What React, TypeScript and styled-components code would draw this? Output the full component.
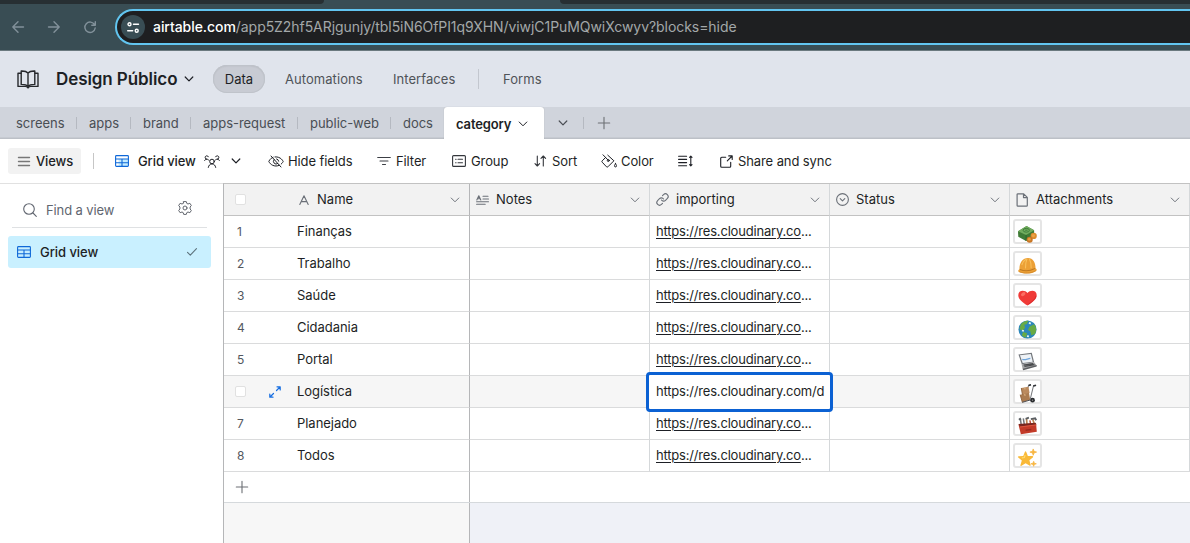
import React from 'react';
import styled, { createGlobalStyle, css } from 'styled-components';

const GlobalStyle = createGlobalStyle`
  * { box-sizing: border-box; }
  body { margin: 0; overflow: hidden; }
`;

const Page = styled.div`
  width: 1190px;
  height: 543px;
  overflow: hidden;
  display: flex;
  flex-direction: column;
  background: #fff;
  color: #1d1f25;
  font-family: Inter, "Liberation Sans", sans-serif;
  font-size: 13px;
  line-height: 18px;
  white-space: nowrap;
`;

const Svg = styled.svg`
  display: block;
  flex: none;
  overflow: visible;
`;

/* ---------- Browser chrome ---------- */

const Chrome = styled.div`
  height: 51px;
  flex: none;
  background: #394d54;
  border-bottom: 1px solid #6b797f;
`;

const TabStrip = styled.div`
  height: 4px;
  display: flex;
  justify-content: space-between;
`;

const TabShadow = styled.div<{ $w: number; $side: 'left' | 'right' }>`
  width: ${(p) => p.$w}px;
  background: #272f33;
  border-radius: ${(p) => (p.$side === 'left' ? '0 0 8px 0' : '0 0 0 8px')};
`;

const AddressRow = styled.div`
  display: flex;
  padding-top: 5px;
`;

const NavButtons = styled.div`
  width: 115px;
  display: flex;
  align-items: center;
  padding-left: 12px;
  gap: 24px;
  color: #82919a;
`;

const Omnibox = styled.div`
  flex: 1;
  height: 36px;
  display: flex;
  align-items: center;
  gap: 8px;
  padding-left: 4px;
  background: #1e1f21;
  border: 2px solid #62c5f0;
  border-right: 0;
  border-radius: 18px 0 0 18px;
`;

const SiteBadge = styled.div`
  width: 24px;
  height: 24px;
  border-radius: 50%;
  background: #394d54;
  display: grid;
  place-items: center;
  color: #fff;
`;

const Url = styled.div`
  font-size: 14px;
  letter-spacing: -0.06px;
  color: #a3a8a9;
  b {
    font-weight: 500;
    color: #fff;
  }
`;

/* ---------- Base header ---------- */

const Header = styled.header`
  height: 56px;
  flex: none;
  display: flex;
  align-items: center;
  padding-left: 17px;
  background: #e0e4ec;
`;

const BaseName = styled.h1`
  margin: 0 0 0 17px;
  width: 128px;
  font-size: 17px;
  line-height: 24px;
  font-weight: 600;
  letter-spacing: -0.08px;
`;

const NavPill = styled.div`
  width: 52px;
  height: 28px;
  margin-left: 19px;
  display: grid;
  place-items: center;
  padding-bottom: 1px;
  border-radius: 14px;
  background: #c8cbd3;
  box-shadow: inset 0 0 0 1px #bfc3ca, inset 0 1px 2px rgba(0, 0, 0, 0.1);
`;

const NavLink = styled.div<{ $w: number; $ml?: number }>`
  width: ${(p) => p.$w}px;
  margin-left: ${(p) => p.$ml ?? 20}px;
  padding-bottom: 1px;
  color: #4f5358;
  letter-spacing: 0.06px;
`;

const Rule = styled.div<{ $h: number; $color: string; $ml?: number; $mr?: number }>`
  width: 1px;
  height: ${(p) => p.$h}px;
  flex: none;
  background: ${(p) => p.$color};
  margin-left: ${(p) => p.$ml ?? 0}px;
  margin-right: ${(p) => p.$mr ?? 0}px;
`;

/* ---------- Table tabs ---------- */

const TabBar = styled.nav`
  height: 32px;
  flex: none;
  display: flex;
  align-items: center;
  background: #d0d4dc;
  border-bottom: 1px solid #bcc0c7;
  box-shadow: inset 0 -1px 0 #c6cad1;
  color: #4a4e54;
`;

const TabList = styled.div`
  display: flex;
  width: 444px;
  padding: 1px 0 0 4px;
`;

const TableTab = styled.div<{ $w: number; $last?: boolean }>`
  width: ${(p) => p.$w}px;
  display: flex;
  align-items: center;
  justify-content: space-between;
  padding-left: 12px;
  letter-spacing: -0.03px;
  &::after {
    content: '';
    width: 1px;
    height: 12px;
    background: ${(p) => (p.$last ? 'transparent' : '#b5b9c1')};
  }
`;

const ActiveTab = styled.div`
  width: 100px;
  height: 32px;
  align-self: flex-start;
  display: flex;
  align-items: center;
  padding: 1px 0 0 12px;
  gap: 7px;
  background: #fff;
  border-radius: 3px 3px 0 0;
  color: #1d1f25;
  font-weight: 600;
  letter-spacing: -0.13px;
  box-shadow: 0 0 1px rgba(0, 0, 0, 0.25);
  clip-path: inset(-1px -1px 0 -1px);
`;

const TabActions = styled.div`
  display: flex;
  align-items: center;
  padding-left: 14px;
`;

/* ---------- View toolbar ---------- */

const Toolbar = styled.div`
  height: 44px;
  flex: none;
  display: flex;
  align-items: center;
  padding-left: 8px;
`;

const ViewsButton = styled.div`
  width: 73px;
  height: 26px;
  display: flex;
  align-items: center;
  gap: 6px;
  padding-left: 10px;
  border-radius: 3px;
  background: #f2f2f2;
  font-weight: 500;
  letter-spacing: -0.1px;
`;

const Tool = styled.div<{ $w: number; $gap?: number; $strong?: boolean }>`
  width: ${(p) => p.$w}px;
  flex: none;
  display: flex;
  align-items: center;
  gap: ${(p) => p.$gap ?? 4}px;
  font-weight: ${(p) => (p.$strong ? 500 : 400)};
  letter-spacing: -0.1px;
`;

/* ---------- Sidebar ---------- */

const Body = styled.div`
  flex: 1;
  display: flex;
  min-height: 0;
`;

const Sidebar = styled.aside`
  width: 223px;
  flex: none;
  border-top: 1px solid #e1e1e1;
  padding: 8px 12px 0 8px;
`;

const SearchRow = styled.div`
  height: 36px;
  margin: 0 4px;
  padding: 0 15px 0 11px;
  display: flex;
  align-items: center;
  border-bottom: 1px solid #dfe1e3;
  color: #616670;
`;

const SearchLabel = styled.span`
  flex: 1;
  margin-left: 9px;
  padding-top: 1px;
  letter-spacing: -0.12px;
`;

const SidebarView = styled.div`
  height: 32px;
  width: 203px;
  margin-top: 8px;
  padding: 0 14px 0 9px;
  display: flex;
  align-items: center;
  background: #c9f0ff;
  border-radius: 3px;
  font-weight: 500;
  letter-spacing: -0.06px;
  span {
    flex: 1;
    margin-left: 9px;
  }
`;

const GearSlot = styled.div`
  margin-top: -4px;
`;

/* ---------- Grid ---------- */

const GridPane = styled.main`
  flex: 1;
  display: flex;
  flex-direction: column;
  border-top: 1px solid #c2c2c2;
  border-left: 1px solid #b5b6b8;
`;

const Row = styled.div<{ $header?: boolean; $hover?: boolean }>`
  display: grid;
  grid-template-columns: 246px repeat(4, 180px);
  height: 32px;
  flex: none;
  ${(p) => p.$header && css`background: #f2f2f2; > div { border-bottom-color: #c2c2c2; }`}
  ${(p) => p.$hover && css`background: #f6f6f6;`}
`;

const Cell = styled.div<{ $pad?: number; $frozen?: boolean }>`
  min-width: 0;
  position: relative;
  display: flex;
  align-items: center;
  padding-left: ${(p) => p.$pad ?? 6}px;
  border-bottom: 1px solid #dadbdc;
  border-right: 1px solid ${(p) => (p.$frozen ? '#b5b6b8' : '#d5d8da')};
`;

const FieldTitle = styled.span`
  flex: 1;
  margin-left: 7px;
  padding-bottom: 1px;
  letter-spacing: 0.02px;
`;

const FieldMenu = styled.span`
  margin-right: 9px;
  color: #70757d;
`;

const IndexSlot = styled.span`
  width: 34px;
  color: #54585f;
  font-size: 12px;
  padding-left: 2px;
`;

const Checkbox = styled.span`
  width: 11px;
  height: 11px;
  display: block;
  margin-left: -2px;
  border: 1px solid #e1e1e1;
  border-radius: 2px;
  background: #fff;
`;

const ExpandSlot = styled.span`
  width: 28px;
  color: #166ee1;
`;

const CellText = styled.span`
  padding-bottom: 2px;
  letter-spacing: -0.04px;
`;

const Link = styled.span`
  padding-bottom: 2px;
  letter-spacing: -0.19px;
  u {
    text-underline-offset: 2px;
    text-decoration-thickness: 1px;
  }
`;

const CellEditor = styled.div`
  position: absolute;
  z-index: 2;
  left: -4px;
  top: -4px;
  width: 187px;
  height: 40px;
  padding: 0 6px 0 7px;
  border: 3px solid #0b61d3;
  border-radius: 4px;
  background: #fff;
  line-height: 33px;
  letter-spacing: -0.19px;
`;

const Thumb = styled.div`
  width: 29px;
  height: 25px;
  margin-left: -3px;
  display: grid;
  place-items: center;
  padding-top: 3px;
  background: #fff;
  border: 2px solid #e5e5e5;
  border-radius: 3px;
`;

const AddRow = styled.div`
  height: 31px;
  flex: none;
  display: grid;
  grid-template-columns: 246px 1fr;
  border-bottom: 1px solid #d5d9dc;
`;

const AddCell = styled.div`
  display: flex;
  align-items: center;
  padding-left: 12px;
  border-right: 1px solid #b5b6b8;
`;

const Footer = styled.div`
  flex: 1;
  display: grid;
  grid-template-columns: 246px 1fr;
  background: #eff1f7;
`;

const FooterFrozen = styled.div`
  background: #f7f7f7;
  border-right: 1px solid #b5b6b8;
`;

/* ---------- Icons ---------- */

type IconProps = { w: number; h?: number; vb?: string; sw?: number; color?: string; children: React.ReactNode };

const Icon = ({ w, h = w, vb, sw = 1, color = 'currentColor', children }: IconProps) => (
  <Svg width={w} height={h} viewBox={vb ?? `0 0 ${w} ${h}`} fill="none" stroke={color}
    strokeWidth={sw} strokeLinecap="round" strokeLinejoin="round">
    {children}
  </Svg>
);

const Chevron = ({ color, sw = 1 }: { color?: string; sw?: number }) => (
  <Icon w={10} h={6} sw={sw} color={color}><path d="M1.2 1L5 4.800 8.800 1" /></Icon>
);

const Plus = () => (
  <Icon w={12} sw={1.1} color="#6c6f74"><path d="M6 .3v11.4M.3 6h11.4" /></Icon>
);

const GridIcon = () => (
  <Icon w={14} h={12} sw={1.1} color="#0f68d8">
    <rect x="3.6" y="4" width="9.6" height="7" fill="#c4ecff" stroke="none" />
    <rect x=".6" y=".6" width="12.8" height="10.8" rx=".8" />
    <path d="M.6 4h12.8M.6 7.7h12.8M7 4v7.4" />
  </Icon>
);

const BookIcon = () => (
  <Icon w={22} h={19} sw={1.4} color="#26282c">
    <path d="M11 3.2C9.5 1.2 7 .9 4.2 1v13.4c2.8-.1 5.3.3 6.8 2.1 1.500-1.800 4-2.200 6.800-2.100V1C15 .9 12.500 1.200 11 3.200zM11 3.200v13.300" />
    <path d="M4 3.200H1v13.200h7.200c1.300 0 2 .5 2.800 1.500.8-1 1.500-1.500 2.800-1.500H21V3.200h-3" />
  </Icon>
);

const PeopleIcon = () => (
  <Icon w={16} h={13} sw={1}>
    <circle cx="8" cy="6.500" r="2.300" />
    <path d="M4.300 12.400c.4-2 1.700-3.500 3.700-3.500s3.300 1.500 3.700 3.500M.6 5.500C1.100 4.700 1.800 4.200 2.800 4.200a1.700 1.700 0 1 1 1.600-2.400M15.400 5.500c-.5-.8-1.200-1.300-2.200-1.300a1.700 1.700 0 1 0-1.600-2.400M2.800 4.200c1 0 1.600.3 2.100 1M13.200 4.200c-1 0-1.600.3-2.100 1" />
  </Icon>
);

const HideIcon = () => (
  <Icon w={16} h={13} sw={1}>
    <path d="M3 1l10 11M5.100 2.200C2.100 3.300.8 6.500.8 6.500s2 4.500 7.200 4.500c1.300 0 2.400-.3 3.300-.7M7 1.900c6-.6 8.200 4.600 8.200 4.600s-.6 1.400-2 2.600M6.100 4.600a2.700 2.700 0 0 0 3.700 3.900M8.600 3.900a2.700 2.700 0 0 1 2.100 2.300" />
  </Icon>
);

const FilterIcon = () => (
  <Icon w={14} h={10} sw={1.1} color="#3c3f45"><path d="M.7 1.500h12.600M3 5h8M5.500 8.500h3" /></Icon>
);

const GroupIcon = () => (
  <Icon w={14} h={12} sw={1.1} color="#34373c">
    <rect x=".6" y=".6" width="12.800" height="10.800" rx="1" />
    <path d="M3.600 4.200h.5M6 4.200h4.500M3.600 7.700h.5M6 7.700h4.500" />
  </Icon>
);

const SortIcon = () => (
  <Icon w={13} h={12} sw={1.1} color="#34373c">
    <path d="M3.300 1v10M1 8.700L3.300 11l2.300-2.300M9.300 11V1M7 3.300L9.300 1l2.300 2.300" />
  </Icon>
);

const ColorIcon = () => (
  <Icon w={16} h={14} sw={1}>
    <path d="M2 .8l5.200 5.400M6.800 1.200l6.100 5.600-6 6a1 1 0 0 1-1.400 0L1.200 8.200a1 1 0 0 1 0-1.400l3.600-3.500" />
    <circle cx="7.300" cy="6.500" r="1" />
    <path d="M14.500 9.600c.7 1.200 1 1.800 1 2.300a1 1 0 0 1-2 0c0-.5.300-1.100 1-2.300z" />
  </Icon>
);

const RowHeightIcon = () => (
  <Icon w={15} h={12} sw={1.1}>
    <path d="M.6 1.200h8M.6 4.400h8M.6 7.600h8M.6 10.800h8M12.800 1.200v9.600M11.600 2.300l1.200-1.200L14 2.300M11.600 9.700l1.200 1.200L14 9.700" />
  </Icon>
);

const ShareIcon = () => (
  <Icon w={13} h={13} sw={1.1}>
    <path d="M8.700.9h3.500v3.500M12.100 1L7.300 5.800M5.700 2.300H1.700a1 1 0 0 0-1 1v8a1 1 0 0 0 1 1h8a1 1 0 0 0 1-1v-4" />
  </Icon>
);

const GearIcon = () => (
  <Icon w={14} sw={1} color="#62666e">
    <circle cx="7" cy="7" r="2" />
    <path d="M5.700.6h2.600l.5 1.800 1.200.6 1.900-.7 1.400 2.200-1.200 1.500v2l1.200 1.500-1.400 2.200-1.900-.7-1.200.6-.5 1.800H5.700l-.5-1.800-1.200-.6-1.900.7L.7 9.500 1.900 8V6L.7 4.500l1.400-2.200L4 3l1.200-.6z" />
  </Icon>
);

const fieldIcons: Record<string, React.ReactNode> = {
  text: <Icon w={12} color="#6b7078" sw={1.1}><path d="M1.800 10.500L6 1.800l4.200 8.700M3.300 7.600h5.400" /></Icon>,
  notes: (
    <Icon w={13} h={10} color="#6b7078" sw={1.1}>
      <path d="M.8 5L2.800.8 4.800 5M1.500 3.700h2.600M7 1.200h5M7 4h5.500M.6 6.700h11.900M.6 9.300h8.600" />
    </Icon>
  ),
  url: (
    <Icon w={13} h={13} vb="0 0 24 24" color="#6b7078" sw={2}>
      <path d="M10 13a5 5 0 0 0 7.54.54l3.500-3.500a5 5 0 0 0-7.070-7.070l-2 2M14 11a5 5 0 0 0-7.540-.54l-3.500 3.500a5 5 0 0 0 7.070 7.070l2-2" />
    </Icon>
  ),
  select: (
    <Icon w={13} color="#6b7078" sw={1.1}><circle cx="6.500" cy="6.500" r="5.900" /><path d="M4.200 5.600l2.300 2.200 2.300-2.200" /></Icon>
  ),
  file: (
    <Icon w={13} h={14} color="#6b7078" sw={1.2}><path d="M7.700.8H1.900a.8.8 0 0 0-.8.8v10.800a.8.8 0 0 0 .8.8h8.600a.8.8 0 0 0 .8-.8V4.400zM7.500.9v3.700h3.700" /></Icon>
  ),
};

const thumbs: React.ReactNode[] = [
  <>
    <path d="M0 7.500L9 2l8 4.500v6.500L8.500 18 .3 13.500z" fill="#3f7b36" />
    <path d="M0 7.500L9 2l8 4.500-8.500 5z" fill="#72ad5f" />
    <path d="M8.500 11.500v6.300" stroke="#2c6329" />
    <ellipse cx="8.700" cy="6.600" rx="3.300" ry="2" stroke="#3c7c38" />
    <path d="M7.500 6.500h2.500" stroke="#3c7c38" />
    <circle cx="16.500" cy="12.500" r="3.300" fill="#dd8c2e" /><circle cx="12.300" cy="16.500" r="3.200" fill="#c97625" />
    <circle cx="16.200" cy="12.200" r="1.700" fill="#eda347" /><circle cx="12" cy="16" r="1.600" fill="#e69a3f" />
  </>,
  <>
    <path d="M1.500 14C1.500 6.500 5 2 10.500 2c5.300 0 8 4.500 8 11 1.500 1 1.600 2.100.6 2.800-4 3.200-13 3.700-18.600.8-.8-1 .2-2 1-2.600z" fill="#eca036" />
    <path d="M4 9.500C5 6.500 6.500 4.500 8.500 3.500M9.500 3c-1.300 3-1.800 6.500-1.600 10M12 3c1.500 3 2 6.500 1.900 10" stroke="#f9c05c" strokeWidth="1.100" />
    <path d="M2 14.300c4.500 1.800 11 1.500 16-1.300" stroke="#be7922" strokeWidth="1.100" />
    <path d="M1.300 16.600c5 2 12.500 1.800 17.500-1.200" stroke="#cf8628" strokeWidth=".8" />
  </>,
  <>
    <path d="M10 18.500C5 15 .3 12 .3 7.500.3 1.800 7.200 1.500 10 5.300c2.800-3.800 9.700-3.500 9.700 2.200 0 4.500-4.700 7.500-9.700 11z" fill="#f03a37" />
    <ellipse cx="5.500" cy="6.500" rx="2.600" ry="1.700" fill="#fb6e63" transform="rotate(-35 5.500 6.500)" />
    <path d="M11 17c4-2.800 7.300-5 7.800-8.500" stroke="#d42a2e" />
  </>,
  <>
    <circle cx="10" cy="10" r="9.500" fill="#2c87bb" />
    <path d="M3 4.500c2-2.500 5-4 8-3.600L9 4.500 6.500 5l1 3L5 11.500l-3.500-2zM12 7l5-2.500c2.500 3 3 7 .5 10.500L14 16l-1-4-2.500-1.500zM5.500 12.500l4 1.500-1 4.300c-2-.3-3.500-1-4.500-2.300z" fill="#68ab45" />
    <path d="M4.200 11l2 .6M11.500 3l2 .8M9.500 17l2 .2" stroke="#e1f4ef" strokeWidth="1.800" />
  </>,
  <>
    <path d="M.5 2.500L14.500.8l2.500 10L4 13z" fill="#73777c" />
    <path d="M2 3.500l11.500-1.300 2 8L5 11.500z" fill="#eef2f6" />
    <path d="M4.500 7.800c3 1 5-.5 8.500-1" stroke="#6fa5dc" strokeWidth="1.400" />
    <path d="M3.800 13L17 10.800l2.700 3.500L5 18.300z" fill="#a3a4a6" />
    <path d="M5 17.700l14.700-3.900v1.500L5.500 19.300z" fill="#5d5f62" />
    <path d="M6 13.800l10-1.600M6.800 15.300l10.500-2" stroke="#47494c" strokeWidth="1.200" />
  </>,
  <>
    <path d="M19 1.500l-2.700.5-3.300 13.500 1.500 1.500M13.500.8l-2.300.7-1.700 5" stroke="#6a6d71" strokeWidth="1" />
    <path d="M16 2.100l3-.8M11 1.600l2.700-.9" stroke="#303236" strokeWidth="1.600" />
    <path d="M3.500 4.200L11 3l1.200 6.500-7.500 2z" fill="#bb8a5e" />
    <path d="M2.300 11.300l9.200-2 1.300 7.200-8.200 2.800z" fill="#ab7b50" />
    <path d="M3.500 4.200l1.200 7.200M2.300 11.300l2.300 8" stroke="#8e633d" />
    <path d="M7 3.700l.4 2M7 10.400l.5 2" stroke="#d9b183" strokeWidth="1.200" />
    <circle cx="15.300" cy="17" r="2.500" fill="#2b2d30" /><circle cx="15.300" cy="17" r=".7" fill="#999" />
    <path d="M4.500 19.300l8.500-2.500" stroke="#44464a" />
  </>,
  <>
    <path d="M3.500 10L2.500 3M6.800 10L5.600 2.500" stroke="#747679" strokeWidth="1.600" />
    <path d="M9.500 9.500L9 3M17.500 9.500l-2-6" stroke="#ba8653" strokeWidth="1.800" />
    <path d="M13.500 9.500l-1-5" stroke="#c14635" strokeWidth="1.500" />
    <path d="M1 4l2-1.500M8 3l3.500-1.200M13.500 3.300L18 2.500l1.200 2" stroke="#5b5f63" strokeWidth="2" />
    <path d="M.5 9L19 7.500l.8 9L3 19.300z" fill="#c33b29" />
    <path d="M.5 8.500L18.500 7l.7 2L2 11z" fill="#79271f" />
    <path d="M2 11.600l17.300-2.200" stroke="#dd5841" /><path d="M8 14.300l6-.8v1.500l-6 .8z" fill="#9a2b20" />
  </>,
  <>
    <path d="M7.200 4.300c.5-1 1.100-1 1.500 0l1.700 4 4.700.2c1 0 1.200.8.5 1.400L12 12.800l1.300 4.800c.2 1-.5 1.400-1.300.9L8 16l-4.300 2.800c-.8.5-1.400 0-1.100-.9L4 13.200.3 10.100c-.7-.6-.5-1.300.5-1.400l4.700-.3z" fill="#f9b938" />
    <path d="M7.500 7.500L6.700 10l-2.700.4" stroke="#ffdb72" strokeWidth="1.200" />
    <path d="M16 1l.9 2.500 2.700.8-2.700.9L16 7.700l-.8-2.500-2.700-.9 2.700-.8zM16.500 14l.7 2 2.100.6-2.100.7-.7 2-.7-2-2.100-.7 2.100-.6z" fill="#f7b540" stroke="#f7b540" strokeWidth=".8" strokeLinejoin="round" />
  </>,
];

const fields = [
  { name: 'Notes', icon: 'notes' },
  { name: 'importing', icon: 'url' },
  { name: 'Status', icon: 'select' },
  { name: 'Attachments', icon: 'file' },
];

const names = ['Finanças', 'Trabalho', 'Saúde', 'Cidadania', 'Portal', 'Logística', 'Planejado', 'Todos'];
const activeRow = 5;

const tables = [
  { name: 'screens', w: 73 },
  { name: 'apps', w: 54 },
  { name: 'brand', w: 60 },
  { name: 'apps-request', w: 107 },
  { name: 'public-web', w: 93 },
  { name: 'docs', w: 53 },
];

export default function App() {
  return (
    <Page>
      <GlobalStyle />
      <Chrome>
        <TabStrip>
          <TabShadow $w={324} $side="left" />
          <TabShadow $w={630} $side="right" />
        </TabStrip>
        <AddressRow>
          <NavButtons>
            <Icon w={12} sw={1.4}><path d="M11.500 6H.8M6 .8L.8 6 6 11.200" /></Icon>
            <Icon w={12} sw={1.4}><path d="M.5 6h10.700M6 .8L11.200 6 6 11.200" /></Icon>
            <Icon w={12} sw={1.4}><path d="M10.600 3.700A5.200 5.200 0 1 0 11.200 7M11.300.7v3.500H7.800" /></Icon>
          </NavButtons>
          <Omnibox>
            <SiteBadge>
              <Icon w={12} h={11} sw={1.4}>
                <circle cx="2.500" cy="2.300" r="1.500" /><path d="M6.500 2.300h5M.7 8.700h5" /><circle cx="9.700" cy="8.700" r="1.500" />
              </Icon>
            </SiteBadge>
            <Url><b>airtable.com</b>/app5Z2hf5ARjgunjy/tbl5iN6OfPI1q9XHN/viwjC1PuMQwiXcwyv?blocks=hide</Url>
          </Omnibox>
        </AddressRow>
      </Chrome>

      <Header>
        <BookIcon />
        <BaseName>Design Público</BaseName>
        <Chevron sw={1.200} />
        <NavPill>Data</NavPill>
        <NavLink $w={88}>Automations</NavLink>
        <NavLink $w={85}>Interfaces</NavLink>
        <Rule $h={20} $color="#c3c7cf" />
        <NavLink $w={60} $ml={24}>Forms</NavLink>
      </Header>

      <TabBar>
        <TabList>
          {tables.map((t, i) => (
            <TableTab key={t.name} $w={t.w} $last={i === tables.length - 1}>{t.name}</TableTab>
          ))}
        </TabList>
        <ActiveTab>category<Chevron /></ActiveTab>
        <TabActions>
          <Chevron sw={1.200} />
          <Rule $h={12} $color="#b5b9c1" $ml={15} $mr={14} />
          <Plus />
        </TabActions>
      </TabBar>

      <Toolbar>
        <ViewsButton>
          <Icon w={12} h={11} color="#777" sw={1.4}><path d="M.5 1.500h11M.5 5.500h11M.5 9.500h11" /></Icon>
          Views
        </ViewsButton>
        <Rule $h={16} $color="#c6c6c6" $ml={12} $mr={21} />
        <Tool $w={89} $gap={9} $strong><GridIcon />Grid view</Tool>
        <Tool $w={64} $gap={11}><PeopleIcon /><Chevron sw={1.200} /></Tool>
        <Tool $w={109}><HideIcon />Hide fields</Tool>
        <Tool $w={75} $gap={5}><FilterIcon />Filter</Tool>
        <Tool $w={82} $gap={5}><GroupIcon />Group</Tool>
        <Tool $w={67} $gap={5}><SortIcon />Sort</Tool>
        <Tool $w={77}><ColorIcon />Color</Tool>
        <Tool $w={42}><RowHeightIcon /></Tool>
        <Tool $w={120} $gap={5}><ShareIcon />Share and sync</Tool>
      </Toolbar>

      <Body>
        <Sidebar>
          <SearchRow>
            <Icon w={14} sw={1.1}><circle cx="6" cy="6" r="5.300" /><path d="M10 10l3.300 3.300" /></Icon>
            <SearchLabel>Find a view</SearchLabel>
            <GearSlot><GearIcon /></GearSlot>
          </SearchRow>
          <SidebarView>
            <GridIcon />
            <span>Grid view</span>
            <Icon w={10} h={8} color="#5d737d" sw={1.1}><path d="M.5 4.300l2.800 2.900L9.500.6" /></Icon>
          </SidebarView>
        </Sidebar>

        <GridPane>
          <Row $header>
            <Cell $frozen $pad={11}>
              <IndexSlot><Checkbox /></IndexSlot>
              <ExpandSlot />
              <HeaderIcon>{fieldIcons.text}</HeaderIcon>
              <FieldTitle>Name</FieldTitle>
              <FieldMenu><Chevron /></FieldMenu>
            </Cell>
            {fields.map((f) => (
              <Cell key={f.name}>
                {fieldIcons[f.icon]}
                <FieldTitle>{f.name}</FieldTitle>
                <FieldMenu><Chevron /></FieldMenu>
              </Cell>
            ))}
          </Row>
          {names.map((name, i) => (
            <Row key={name} $hover={i === activeRow}>
              <Cell $frozen $pad={11}>
                <IndexSlot>{i === activeRow ? <Checkbox /> : i + 1}</IndexSlot>
                <ExpandSlot>
                  {i === activeRow && (
                    <Icon w={12} sw={1.2}><path d="M8 .8h3.200V4M11 1L7.500 4.500M4 11.200H.8V8M1 11l3.500-3.500" /></Icon>
                  )}
                </ExpandSlot>
                <CellText>{name}</CellText>
              </Cell>
              <Cell />
              <Cell>
                {i === activeRow ? (
                  <CellEditor>https://res.cloudinary.com/d</CellEditor>
                ) : (
                  <Link><u>https://res.cloudinary.co</u>...</Link>
                )}
              </Cell>
              <Cell />
              <Cell>
                <Thumb>
                  <Svg width="19" height="19" viewBox="0 0 20 20" fill="none">{thumbs[i]}</Svg>
                </Thumb>
              </Cell>
            </Row>
          ))}
          <AddRow><AddCell><Plus /></AddCell></AddRow>
          <Footer><FooterFrozen /></Footer>
        </GridPane>
      </Body>
    </Page>
  );
}

const HeaderIcon = styled.span`
  margin-left: 1px;
`;
